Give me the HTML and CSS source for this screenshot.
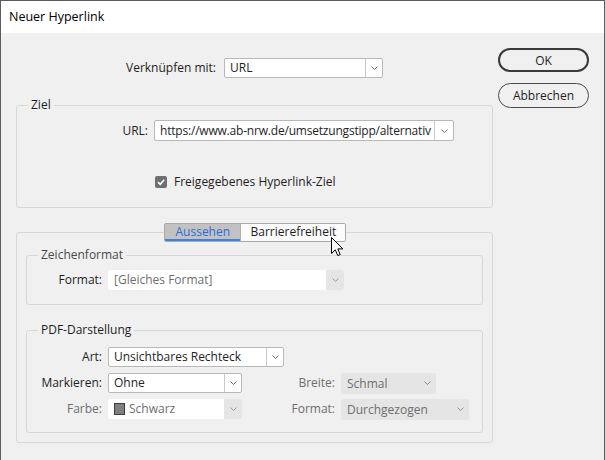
FILE: index.html
```html
<!DOCTYPE html>
<html lang="de">
<head>
<meta charset="utf-8">
<title>Neuer Hyperlink</title>
<link rel="stylesheet" href="styles.css">
</head>
<body>
<div class="window">
  <div class="titlebar">Neuer Hyperlink</div>
  <div class="content">
    <div class="main">
      <div class="link-row">
        <span class="label link-label">Verknüpfen mit:</span>
        <div class="select sel-link"><span class="value">URL</span><span class="arrow"><svg viewBox="0 0 7 4"><path d="M0.5 0.5 L3.5 3.5 L6.5 0.5"/></svg></span></div>
      </div>

      <fieldset class="group ziel">
        <legend>Ziel</legend>
        <div class="url-row">
          <span class="label url-label">URL:</span>
          <div class="select sel-url"><span class="value">https://www.ab-nrw.de/umsetzungstipp/alternativ</span><span class="arrow wide"><svg viewBox="0 0 7 4"><path d="M0.5 0.5 L3.5 3.5 L6.5 0.5"/></svg></span></div>
        </div>
        <div class="check-row">
          <span class="checkbox"><svg viewBox="0 0 12 12"><path d="M3 6.2 L5.2 8.3 L9.2 3.8"/></svg></span>
          <span class="label">Freigegebenes Hyperlink-Ziel</span>
        </div>
      </fieldset>

      <fieldset class="panel">
        <legend class="tabs">
          <span class="tab active">Aussehen</span><span class="tab">Barrierefreiheit</span>
        </legend>

        <fieldset class="group zeichen">
          <legend class="muted-legend">Zeichenformat</legend>
          <div class="format-row">
            <span class="label format-label">Format:</span>
            <div class="select disabled sel-format"><span class="value">[Gleiches Format]</span><span class="arrow"><svg viewBox="0 0 7 4"><path d="M0.5 0.5 L3.5 3.5 L6.5 0.5"/></svg></span></div>
          </div>
        </fieldset>

        <fieldset class="group pdf">
          <legend>PDF-Darstellung</legend>
          <div class="pdf-grid">
            <span class="label">Art:</span>
            <div class="select sel-art"><span class="value">Unsichtbares Rechteck</span><span class="arrow"><svg viewBox="0 0 7 4"><path d="M0.5 0.5 L3.5 3.5 L6.5 0.5"/></svg></span></div>

            <span class="label">Markieren:</span>
            <div class="select sel-mark"><span class="value">Ohne</span><span class="arrow"><svg viewBox="0 0 7 4"><path d="M0.5 0.5 L3.5 3.5 L6.5 0.5"/></svg></span></div>
            <span class="label muted">Breite:</span>
            <div class="select filled sel-breite"><span class="value">Schmal</span><span class="arrow"><svg viewBox="0 0 7 4"><path d="M0.5 0.5 L3.5 3.5 L6.5 0.5"/></svg></span></div>

            <span class="label muted">Farbe:</span>
            <div class="select disabled sel-farbe"><span class="value"><span class="swatch"></span>Schwarz</span><span class="arrow"><svg viewBox="0 0 7 4"><path d="M0.5 0.5 L3.5 3.5 L6.5 0.5"/></svg></span></div>
            <span class="label muted">Format:</span>
            <div class="select filled sel-stil"><span class="value">Durchgezogen</span><span class="arrow"><svg viewBox="0 0 7 4"><path d="M0.5 0.5 L3.5 3.5 L6.5 0.5"/></svg></span></div>
          </div>
        </fieldset>
      </fieldset>
    </div>

    <div class="buttons">
      <button class="btn default">OK</button>
      <button class="btn">Abbrechen</button>
    </div>
  </div>

  <svg class="cursor" viewBox="0 0 13 20" width="13" height="20"><path d="M0.5 0.5 L0.5 16.5 L4.3 12.8 L6.8 18.6 L9.2 17.6 L6.8 11.9 L11.8 11.9 Z"/></svg>
</div>
</body>
</html>
```

FILE: styles.css
```css
* { box-sizing: border-box; }

html, body {
  margin: 0;
  padding: 0;
  background: #f0f0f0;
}

body {
  font-family: "Open Sans", "Noto Sans", sans-serif;
  font-size: 12px;
  color: #1e1e1e;
}

.window {
  position: relative;
  width: 605px;
  height: 460px;
  border: 1px solid #5c5c5c;
  border-bottom: none;
  background: #f0f0f0;
  overflow: hidden;
}

.titlebar {
  height: 32px;
  background: #ffffff;
  padding-left: 8px;
  line-height: 31px;
  font-size: 12.5px;
  color: #000;
}

.content {
  display: flex;
  padding-left: 15px;
}

.main {
  width: 477px;
  display: flex;
  flex-direction: column;
}

.buttons {
  margin-left: 5px;
  padding-top: 15px;
  display: flex;
  flex-direction: column;
  gap: 11px;
}

.btn {
  width: 91px;
  height: 25px;
  border: 1px solid #4a4a4a;
  border-radius: 13px;
  background: #f0f0f0;
  font-family: inherit;
  font-size: 12px;
  color: #1e1e1e;
  padding: 0;
}

.btn.default {
  height: 24px;
  border: 2px solid #3a3a3a;
}

.label {
  white-space: nowrap;
  line-height: 16px;
}

.muted { color: #6e6e6e; }

/* selects */
.select {
  display: flex;
  height: 20px;
  border: 1px solid #b8b8b8;
  border-radius: 2px;
  background: #fff;
  overflow: hidden;
}

.select .value {
  flex: 1;
  min-width: 0;
  padding-left: 5px;
  line-height: 18px;
  white-space: nowrap;
  overflow: hidden;
  display: flex;
  align-items: center;
}

.select .arrow {
  width: 17px;
  flex: none;
  border-left: 1px solid #c8c8c8;
  display: flex;
  align-items: center;
  justify-content: center;
}

.select .arrow.wide { width: 19px; }

.select svg {
  width: 7px;
  height: 4px;
  fill: none;
  stroke: #6a6a6a;
  stroke-width: 1;
}

.select.disabled {
  border: none;
  color: #6e6e6e;
}
.select.disabled .value { line-height: 20px; padding-left: 6px; }
.select.disabled .arrow {
  width: 18px;
  border-left: none;
  background: #e5e5e5;
}
.select.disabled svg { stroke: #9a9a9a; }

.select.filled {
  border: none;
  background: #e5e5e5;
  color: #6e6e6e;
}
.select.filled .value { line-height: 21px; padding-left: 6px; }
.select.filled .arrow { width: 18px; border-left: none; }
.select.filled svg { stroke: #8c8c8c; }

/* top row */
.link-row {
  margin-top: 25px;
  display: flex;
  align-items: center;
  height: 20px;
}
.link-label { width: 200px; text-align: right; margin-right: 8px; }
.sel-link { width: 159px; }

/* group boxes */
fieldset {
  margin: 0;
  min-width: 0;
  border: 1px solid #d7d7d7;
  border-radius: 3px;
}

.group { padding: 0; }

.group > legend {
  margin-left: 11px;
  padding: 0 3px;
  line-height: 16px;
  color: #1e1e1e;
}

.group > legend.muted-legend { color: #4a4a4a; }

.ziel {
  margin-top: 19px;
  padding-bottom: 17px;
}

.url-row {
  margin-top: 7px;
  display: flex;
  align-items: center;
}
.url-label { width: 131px; text-align: right; margin-right: 6px; }
.sel-url { width: 300px; height: 21px; }
.sel-url .value { line-height: 19px; letter-spacing: -0.2px; }

.check-row {
  margin-top: 33px;
  height: 16px;
  display: flex;
  align-items: center;
  padding-left: 138px;
  gap: 7px;
}

.checkbox {
  width: 12px;
  height: 12px;
  border-radius: 2px;
  background: #6f6f6f;
  display: block;
}
.checkbox svg {
  display: block;
  width: 12px;
  height: 12px;
  fill: none;
  stroke: #fff;
  stroke-width: 1.6;
}

/* tab panel */
.panel {
  margin-top: 15px;
  padding: 0 9px 9px 9px;
}

.tabs {
  margin: 0 auto;
  padding: 0;
  display: flex;
  height: 19px;
  border: 1px solid #a9a9a9;
  border-radius: 2px;
  overflow: hidden;
}

.tab {
  display: block;
  height: 17px;
  line-height: 16px;
  background: #fbfbfb;
  color: #1e1e1e;
  padding: 0 0 0 10px;
  width: 104px;
}

.tab.active {
  width: 76px;
  padding-left: 11px;
  background: #c2c2c2;
  color: #2b6fd6;
  border-right: 1px solid #b0b0b0;
  box-shadow: inset 0 -2px 0 #3a82e8;
}

.zeichen {
  margin-top: 5px;
  padding-bottom: 14px;
}

.format-row {
  margin-top: 7px;
  display: flex;
  align-items: center;
}
.format-label { width: 75px; text-align: right; margin-right: 6px; }
.sel-format { width: 236px; }

.pdf {
  margin-top: 17px;
  padding-bottom: 13px;
}

.pdf-grid {
  margin-top: 9px;
  display: grid;
  grid-template-columns: 75px 134px 87px auto;
  grid-auto-rows: 20px;
  column-gap: 6px;
  row-gap: 6px;
  align-items: center;
}

.pdf-grid .label { text-align: right; }

.sel-art { grid-column: 2 / -1; justify-self: start; width: 176px; }
.sel-mark { width: 134px; }
.sel-farbe { width: 134px; }
.sel-breite { width: 95px; height: 21px; }
.sel-stil { width: 128px; height: 21px; }

.swatch {
  display: inline-block;
  width: 11px;
  height: 12px;
  background: #7f7f7f;
  border: 1px solid #3d3d3d;
  margin-right: 4px;
  flex: none;
}

.cursor {
  position: absolute;
  left: 330px;
  top: 236px;
  fill: #fff;
  stroke: #000;
  stroke-width: 1;
}
```
